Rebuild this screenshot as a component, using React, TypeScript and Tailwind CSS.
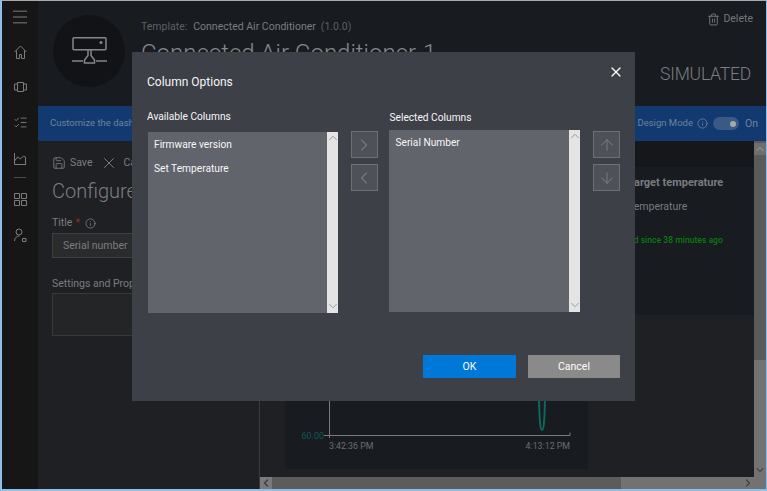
import { ArrowDown, ArrowUp, ChevronDown, ChevronLeft, ChevronRight, ChevronUp, Info, ListChecks, Menu, Save, Trash2, X } from "lucide-react";

function TransferButton({ children }: { children: React.ReactNode }) {
  return (
    <div className="flex h-[27px] w-[27px] items-center justify-center border border-[#6e7074] bg-[#4f5158] text-[#76787d]">
      {children}
    </div>
  );
}

function ListBox({ items, className }: { items: string[]; className: string }) {
  return (
    <div className={`flex bg-[#62646c] ${className}`}>
      <div className="flex-1 pt-[5px] pl-[6px] text-[10.2px] text-[#f7f7f7]">
        {items.map((item) => (
          <div key={item} className="h-[24px] leading-[16px]">
            {item}
          </div>
        ))}
      </div>
      <div className="flex w-[11px] flex-col items-center justify-between overflow-hidden bg-[#e4e4e4] text-[#9a9a9a]">
        <ChevronUp size={14} strokeWidth={1.700} className="-mt-px shrink-0" />
        <ChevronDown size={14} strokeWidth={1.700} className="shrink-0" />
      </div>
    </div>
  );
}

function ColumnOptions() {
  return (
    <div className="absolute top-[51px] left-[130px] flex h-[349px] w-[503px] flex-col bg-[#3e4047] pr-[15px] pl-[15px] text-white">
      <div className="flex h-[44px] items-start justify-between pt-[20px]">
        <h2 className="text-[12px] leading-[20px] text-[#f5f5f5]">Column Options</h2>
        <X size={16} strokeWidth={1.800} className="mt-[-8px] mr-[-4px] text-white" />
      </div>
      <div className="mt-[13px] flex items-start">
        <div className="w-[204px]">
          <div className="mb-[7px] text-[10.2px] leading-[16px] text-[#f7f7f7]">Available Columns</div>
          <ListBox items={["Firmware version", "Set Temperature"]} className="ml-[1px] h-[181px] w-[190px]" />
        </div>
        <div className="mt-[22px] flex w-[39px] flex-col gap-[6px]">
          <TransferButton>
            <ChevronRight size={20} strokeWidth={1.400} />
          </TransferButton>
          <TransferButton>
            <ChevronLeft size={20} strokeWidth={1.400} />
          </TransferButton>
        </div>
        <div className="w-[204px]">
          <div className="mb-[4px] pt-[1px] text-[10.2px] leading-[16px] text-[#f7f7f7]">Selected Columns</div>
          <ListBox items={["Serial Number"]} className="h-[182px] w-[191px]" />
        </div>
        <div className="mt-[22px] flex flex-col gap-[6px]">
          <TransferButton>
            <ArrowUp size={18} strokeWidth={1.400} />
          </TransferButton>
          <TransferButton>
            <ArrowDown size={18} strokeWidth={1.400} />
          </TransferButton>
        </div>
      </div>
      <div className="mt-[42px] flex justify-end gap-[12px] text-[10.5px] text-white">
        <button type="button" className="h-[23px] w-[93px] bg-[#0078d7]">
          OK
        </button>
        <button type="button" className="h-[23px] w-[92px] bg-[#8a8a8a]">
          Cancel
        </button>
      </div>
    </div>
  );
}

function NavRail() {
  return (
    <div className="flex w-[36px] shrink-0 flex-col items-center bg-[#161616] text-[#7a7c7e]">
      <Menu size={20} strokeWidth={1.200} className="mt-[6px]" />
      <svg className="mt-[18px]" width="13" height="14" viewBox="0 0 13 14" fill="none" stroke="currentColor">
        <path d="M.5 7 6.5 1l6 6M2.5 5.500v8h3v-4h2v4h3v-8" />
      </svg>
      <svg className="mt-[23px]" width="13" height="10" viewBox="0 0 13 10" fill="none" stroke="currentColor">
        <path d="M3.500.5h6v9h-6zM3.500 2h-3v6h3M9.500 2h3v6h-3" />
      </svg>
      <ListChecks size={15} strokeWidth={1.500} className="mt-[23px]" />
      <svg className="mt-[23px]" width="12" height="12" viewBox="0 0 12 12" fill="none" stroke="currentColor">
        <path d="M.5 0v11.500H12M.5 8l3-4 3 2 3-3 2 1v7" />
      </svg>
      <div className="mt-[12px] h-px w-[12px] bg-[#4a4a4a]" />
      <svg className="mt-[15px]" width="13" height="13" viewBox="0 0 13 13" fill="none" stroke="currentColor">
        <path d="M.5.5h5v5h-5zM7.500.5h5v5h-5zM.5 7.500h5v5h-5zM7.500 7.500h5v5h-5z" />
      </svg>
      <svg className="mt-[22px]" width="13" height="14" viewBox="0 0 13 14" fill="none" stroke="currentColor">
        <circle cx="5" cy="4" r="3" />
        <path d="M.5 13c0-3 2-5 5-5" />
        <path d="M8.500 10.500h3.500v3h-3.500z" />
      </svg>
    </div>
  );
}

function Header() {
  return (
    <div className="flex h-[105px] shrink-0 bg-[#181b20]">
      <div className="mt-[14px] ml-[15px] flex h-[72px] w-[72px] items-center justify-center rounded-full bg-[#111316]">
        <svg width="35" height="28" viewBox="0 0 35 28" fill="none" stroke="#85878a" strokeWidth="1.500">
          <rect x="1" y="0.800" width="33" height="12" rx="1" />
          <path d="M0 24h11M24 24h11M16 13v5.500L12.500 23v3h10v-3L19 18.500V13" />
          <circle cx="29" cy="5.500" r="0.800" fill="#85878a" />
        </svg>
      </div>
      <div className="ml-[16px] flex-1">
        <div className="mt-[16px] flex h-[20px] items-center gap-[5px] text-[10.5px] text-[#5c5f63]">
          <span>Template:</span>
          <span className="ml-px text-[#7a7d80]">Connected Air Conditioner</span>
          <span>(1.0.0)</span>
        </div>
        <div className="mt-[2px] text-[24px] leading-[28px] font-light whitespace-nowrap text-[#85888b]">Connected Air Conditioner-1</div>
      </div>
      <div className="flex flex-col items-end pt-[9px] pr-[13px]">
        <div className="flex items-center gap-[3px] text-[10.5px] leading-[18px] text-[#75787c]">
          <Trash2 size={13} strokeWidth={1.800} />
          Delete
        </div>
        <div className="mt-[33px] pr-[2px] text-[17.5px] leading-[26px] font-light tracking-[-0.2px] text-[#7b7e82]">SIMULATED</div>
      </div>
    </div>
  );
}

function InfoBar() {
  return (
    <div className="flex h-[35px] shrink-0 items-center justify-between rounded-b-[2px] bg-[#133a70] pr-[8px] pl-[12px] text-[9.5px] text-[#6e8299]">
      <span>Customize the dashboard</span>
      <div className="flex items-center">
        <span>Design Mode</span>
        <Info size={11} strokeWidth={1.800} className="ml-[4px]" />
        <div className="ml-[5px] flex h-[13px] w-[26px] items-center justify-end rounded-full bg-[#3a5a85] pr-[3px]">
          <div className="h-[6px] w-[6px] rounded-full bg-[#a8a8a8]" />
        </div>
        <span className="ml-[6px] text-[10.5px]">On</span>
      </div>
    </div>
  );
}

function ConfigPanel() {
  return (
    <div className="w-[221px] shrink-0 bg-[#1f2023] pl-[14px] text-[#7b7d80]">
      <div className="mt-[13px] flex items-center text-[10.5px] leading-[16px]">
        <Save size={14} strokeWidth={1.500} />
        <span className="ml-[4px]">Save</span>
        <X size={18} strokeWidth={1.300} className="ml-[8px]" />
        <span className="ml-[5px]">Cancel</span>
      </div>
      <div className="mt-[6px] text-[20px] leading-[26px] font-light">Configure</div>
      <div className="mt-[11px] flex items-center text-[10.5px] leading-[16px]">
        Title<span className="ml-[3px] text-[#8f2f2f]">*</span>
        <Info size={11} strokeWidth={1.800} className="ml-[5px]" />
      </div>
      <div className="mt-[2px] flex h-[25px] items-center border border-[#3f3f40] bg-[#2a2b2d] pl-[10px] text-[10.5px]">
        Serial number
      </div>
      <div className="mt-[18px] text-[10.5px] leading-[16px]">Settings and Properties</div>
      <div className="mt-[1px] h-[43px] border border-[#38393a] bg-[#232526]" />
    </div>
  );
}

function TilesArea() {
  return (
    <div className="flex min-h-0 flex-1 flex-col">
      <div className="h-[26px] shrink-0 bg-[#15171b]" />
      <div className="h-[148px] shrink-0 bg-[#181b20] pt-[8px] pl-[368px] text-[10.5px] whitespace-nowrap text-[#7a7c80]">
        <div className="text-[11px] leading-[16px] font-bold">Target temperature</div>
        <div className="mt-[8px] leading-[16px]">Temperature</div>
        <div className="mt-[17px] -ml-[42px] text-[8.600px] leading-[16px] font-medium text-[#0d7a0d]">Disconnected since 38 minutes ago</div>
      </div>
      <div className="flex-1 bg-[#1f2023] pt-[5px] pl-[25px]">
        <div className="h-[149px] w-[303px] bg-[#181b20] pt-[80px]">
          <svg width="303" height="64" viewBox="0 0 303 64" fill="none">
            <path d="M44.500 0v38M39 35.500h246M285 35.500v-3" stroke="#7a7a7a" />
            <path d="M254 0c.5 18 1 30 3 30s2.500-12 3-30" stroke="#0a6a5c" strokeWidth="2" />
            <text x="16.500" y="39" fontSize="9" fill="#0a5c50" fontFamily="Roboto">60.00</text>
            <text x="44" y="49" fontSize="8.800" fill="#6c6e70" fontFamily="Roboto">3:42:36 PM</text>
            <text x="285" y="49" textAnchor="end" fontSize="8.800" fill="#6c6e70" fontFamily="Roboto">4:13:12 PM</text>
          </svg>
        </div>
      </div>
    </div>
  );
}

export default function App() {
  return (
    <div
      className="relative flex h-[491px] w-[767px] overflow-hidden border-t border-r border-b-2 border-l-2 border-t-[#a9a9a9] border-r-[#8fbfe8] border-b-[#8fbfe8] border-l-[#8fbfe8] bg-[#1f2023]"
      style={{ fontFamily: 'Roboto, "Noto Sans", sans-serif' }}
    >
      <NavRail />
      <div className="flex min-w-0 flex-1 flex-col">
        <Header />
        <InfoBar />
        <div className="flex min-h-0 flex-1">
          <ConfigPanel />
          <div className="flex min-w-0 flex-1 flex-col border-l border-[#3a3b3d]">
            <div className="flex min-h-0 flex-1">
              <TilesArea />
              <div className="flex w-[12px] shrink-0 flex-col bg-[#727272]">
                <div className="flex h-[219px] flex-col items-center bg-[#5a5a5a] text-[#8a8a8a]">
                  <ChevronUp size={12} strokeWidth={2.400} className="mt-[2px] bg-[#6e6e6e]" />
                </div>
                <div className="mt-auto flex justify-center pb-[1px] text-[#4a4a4a]">
                  <ChevronDown size={12} strokeWidth={2.400} />
                </div>
              </div>
            </div>
            <div className="flex h-[12px] shrink-0 items-center bg-[#727272]">
              <div className="flex h-full w-[12px] items-center justify-center bg-[#7a7a7a] text-[#3f3f3f]">
                <ChevronLeft size={12} strokeWidth={3} />
              </div>
              <div className="h-full w-[349px] bg-[#5c5c5c]" />
              <div className="ml-auto pr-[12px] text-[#3f3f3f]">
                <ChevronRight size={12} strokeWidth={2.400} />
              </div>
            </div>
          </div>
        </div>
      </div>
      <ColumnOptions />
    </div>
  );
}
